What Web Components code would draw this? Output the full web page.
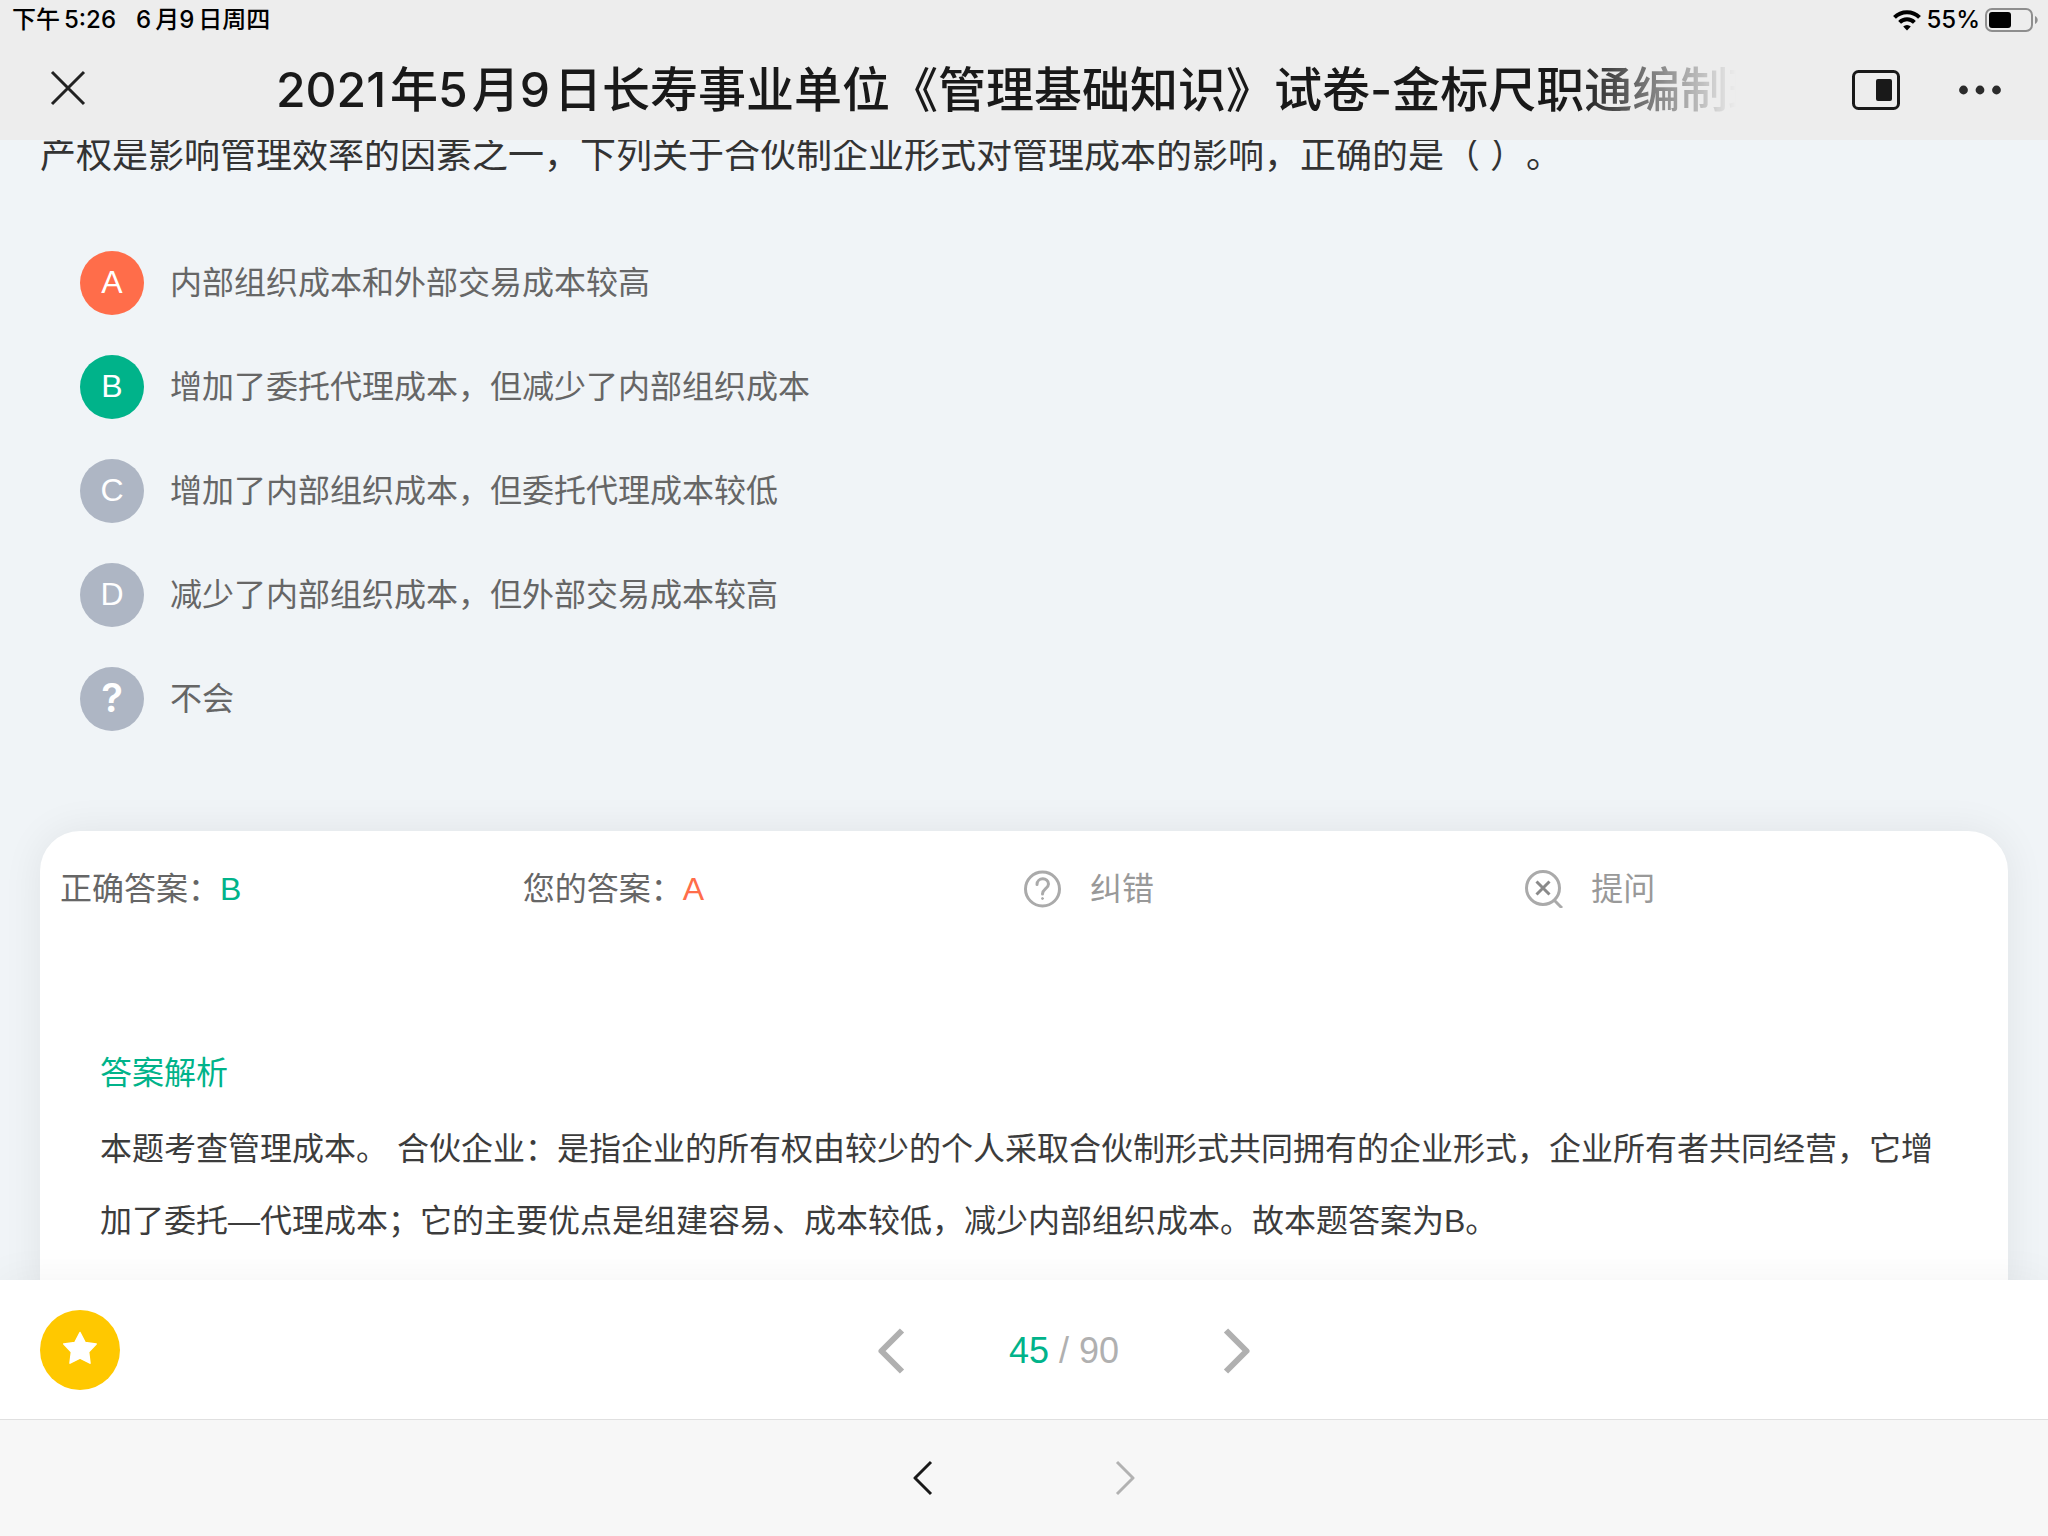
<!DOCTYPE html>
<html lang="zh-CN">
<head>
<meta charset="utf-8">
<meta name="viewport" content="width=device-width, initial-scale=1">
<title>2021年5月9日长寿事业单位《管理基础知识》试卷</title>
<style>
  body {
    margin: 0;
    font-family: "Liberation Sans", "Noto Sans CJK SC", sans-serif;
    text-spacing-trim: space-all;
    color: #333;
  }
</style>
</head>
<body>
<quiz-app></quiz-app>

<script>
// shared by every element that draws a bare button
const BUTTON = `
  button {
    margin: 0;
    padding: 0;
    border: 0;
    background: none;
    font: inherit;
    color: inherit;
    text-align: left;
    cursor: pointer;
  }
  svg {
    display: block;
  }
`;

const define = (name, html) => {
  customElements.define(name, class extends HTMLElement {
    connectedCallback() {
      if (this.shadowRoot) return;
      this.attachShadow({ mode: "open" });
      this.shadowRoot.innerHTML = html;
    }
  });
};

define("status-bar", `
  <style>
    :host {
      display: flex;
      justify-content: space-between;
      align-items: center;
      height: 40px;
      padding: 0 8px 0 12px;
      font: 500 24px/40px Inter, "Noto Sans CJK SC", sans-serif;
      color: #000;
    }
    .clock, .state {
      display: flex;
      align-items: center;
    }
    .clock {
      gap: 20px;
    }
    .clock i {
      font-style: normal;
      margin-right: 4px;
    }
    .state {
      gap: 5px;
    }
    svg {
      display: block;
    }
  </style>
  <div class="clock"><span><i>下午</i>5:26</span><span><i>6</i>月<i>9</i>日周四</span></div>
  <div class="state">
    <svg width="28" height="22" viewBox="0 0 28 22" fill="none" stroke="#000" stroke-width="4">
      <path d="M1.5 8.4a17.6 17.6 0 0 1 25 0M6.6 13.4a10.4 10.4 0 0 1 14.8 0"/>
      <path d="M14 21.4l-3.8-3.9a5.4 5.4 0 0 1 7.6 0z" fill="#000" stroke="none"/>
    </svg>
    <span>55%</span>
    <svg width="55" height="24" viewBox="0 0 55 24">
      <rect x="1" y="1" width="46" height="22" rx="6" fill="none" stroke="#8e8e8e" stroke-width="2"/>
      <rect x="4" y="4" width="22" height="16" rx="3"/>
      <path d="M50 8c3.6 1.5 3.6 6.5 0 8z" fill="#8e8e8e"/>
    </svg>
  </div>
`);

define("title-bar", `
  <style>
    ${BUTTON}
    :host {
      display: flex;
      align-items: center;
      height: 100px;
      color: #191919;
    }
    .close {
      width: 276px;
      padding-left: 50px;
      box-sizing: border-box;
    }
    h1 {
      flex: 1;
      min-width: 0;
      margin: 0;
      overflow: hidden;
      white-space: nowrap;
      font: 500 48px/72px Inter, "Noto Sans CJK SC", sans-serif;
      -webkit-mask-image: linear-gradient(to left, transparent, #000 160px);
      mask-image: linear-gradient(to left, transparent, #000 160px);
    }
    /* numbers in the date stand a little clear of the characters */
    ::slotted(span) {
      margin-right: 4px;
    }
    .actions {
      display: flex;
      justify-content: flex-end;
      align-items: center;
      gap: 59px;
      width: 312px;
      padding-right: 47px;
      box-sizing: border-box;
    }
  </style>
  <div class="close">
    <button aria-label="关闭">
      <svg width="36" height="36" viewBox="0 0 36 36" fill="none" stroke="#222" stroke-width="3">
        <path d="M2 2l32 32M34 2L2 34"/>
      </svg>
    </button>
  </div>
  <h1><slot></slot></h1>
  <div class="actions">
    <button aria-label="浮窗">
      <svg width="48" height="40" viewBox="0 0 48 40">
        <rect x="1.5" y="1.5" width="45" height="37" rx="5" fill="none" stroke="#191919" stroke-width="3"/>
        <rect x="24" y="9" width="16" height="22" rx="2" fill="#191919"/>
      </svg>
    </button>
    <button aria-label="更多">
      <svg width="42" height="10" viewBox="0 0 42 10" fill="#2b2b2b">
        <circle cx="4.5" cy="5" r="4.4"/><circle cx="21" cy="5" r="4.4"/><circle cx="37.5" cy="5" r="4.4"/>
      </svg>
    </button>
  </div>
`);

// <answer-option mark="A" state="wrong">text</answer-option>
class AnswerOption extends HTMLElement {
  connectedCallback() {
    if (this.shadowRoot) return;
    this.attachShadow({ mode: "open" });
    this.shadowRoot.innerHTML = `
      <style>
        ${BUTTON}
        :host {
          display: block;
          --mark: #aeb6c4;
        }
        :host([state="wrong"]) {
          --mark: #ff6d4a;
        }
        :host([state="right"]) {
          --mark: #00b38a;
        }
        button {
          display: flex;
          align-items: center;
          gap: 26px;
          font-size: 32px;
          line-height: 62px;
          color: #666;
        }
        .mark {
          width: 64px;
          height: 64px;
          border-radius: 50%;
          background: var(--mark);
          color: #fff;
          text-align: center;
        }
        :host([mark="?"]) .mark {
          font-family: Inter, sans-serif;
          font-size: 40px;
          font-weight: 600;
        }
      </style>
      <button><span class="mark">${this.getAttribute("mark")}</span><span><slot></slot></span></button>
    `;
  }
}
customElements.define("answer-option", AnswerOption);

define("answer-card", `
  <style>
    ${BUTTON}
    :host {
      display: block;
      border-radius: 40px 40px 0 0;
      background: #fff;
      box-shadow: 0 0 40px rgba(0, 0, 0, 0.07);
      font-size: 32px;
    }
    .summary {
      display: grid;
      grid-template-columns: 24% 26% 26% 24%;
      align-items: center;
      padding: 30px 20px 34px;
      line-height: 56px;
      color: #666;
    }
    .right {
      color: #00b38a;
    }
    .wrong {
      color: #ff6d4a;
    }
    button {
      display: flex;
      align-items: center;
      gap: 28px;
      color: #999;
    }
    .analysis {
      padding: 98px 60px 40px;
    }
    h2 {
      margin: 0 0 16px;
      font-size: 32px;
      font-weight: 400;
      line-height: 48px;
      color: #00b38a;
    }
    p {
      margin: 0;
      line-height: 72px;
      color: #3c3c3c;
    }
  </style>
  <div class="summary">
    <div>正确答案：<span class="right">B</span></div>
    <div>您的答案：<span class="wrong">A</span></div>
    <button>
      <svg width="38" height="38" viewBox="0 0 38 38" fill="none" stroke="#aaa" stroke-width="3" stroke-linecap="round">
        <circle cx="18.5" cy="19" r="17"/>
        <path d="M13 14.5c0-7.5 11.5-7.500 11.5-.5 0 4.500-6 5-6 10"/>
        <circle cx="18.5" cy="28.5" r="1" fill="#aaa" stroke-width="1"/>
      </svg>
      纠错
    </button>
    <button>
      <svg width="38" height="38" viewBox="0 0 38 38" fill="none" stroke="#aaa" stroke-width="3">
        <circle cx="18" cy="18" r="16.5"/>
        <path d="M29.5 30.5l7.5 7.5"/>
        <path d="M11.5 11.5l13 13M24.5 11.5l-13 13" stroke="#8a8a8a"/>
      </svg>
      提问
    </button>
  </div>
  <div class="analysis">
    <h2>答案解析</h2>
    <p><slot></slot></p>
  </div>
`);

define("pager-bar", `
  <style>
    ${BUTTON}
    :host {
      display: flex;
      align-items: center;
      height: 139px;
      padding: 0 40px;
      border-bottom: 1px solid #e0e0e0;
      background: #fff;
      box-shadow: 0 0 40px rgba(0, 0, 0, 0.05);
      position: relative;
    }
    .star {
      display: grid;
      place-items: center;
      width: 80px;
      height: 80px;
      border-radius: 50%;
      background: #ffc800;
    }
    nav {
      flex: 1;
      display: flex;
      justify-content: center;
      align-items: center;
      gap: 104px;
      padding-top: 3px;
      font-size: 36px;
      line-height: 48px;
      color: #b0b0b0;
    }
    b {
      font-weight: 400;
      color: #00b38a;
    }
  </style>
  <button class="star" aria-label="收藏">
    <svg width="34" height="38" viewBox="0 0 34 38" fill="#fff" stroke="#fff" stroke-width="1.5" stroke-linejoin="round">
      <path d="M17 1.5l5.200 10 11 1.400-7.600 8 1.400 11.300-10-5-10 5 1.400-11.300-7.600-8 11-1.400z"/>
    </svg>
  </button>
  <nav>
    <button aria-label="上一题">
      <svg width="28" height="46" viewBox="0 0 28 46" fill="none" stroke="#b0b0b0" stroke-width="6" stroke-linejoin="round">
        <path d="M25 2.5L4.5 23 25 43.5"/>
      </svg>
    </button>
    <span><b>45</b> / 90</span>
    <button aria-label="下一题">
      <svg width="28" height="46" viewBox="0 0 28 46" fill="none" stroke="#b0b0b0" stroke-width="6" stroke-linejoin="round">
        <path d="M3 2.5L23.5 23 3 43.5"/>
      </svg>
    </button>
  </nav>
`);

define("browser-bar", `
  <style>
    ${BUTTON}
    :host {
      display: flex;
      justify-content: center;
      align-items: center;
      gap: 182px;
      height: 116px;
      background: #f7f7f7;
      position: relative;
    }
  </style>
  <button aria-label="后退">
    <svg width="20" height="36" viewBox="0 0 20 36" fill="none" stroke="#191919" stroke-width="3" stroke-linejoin="round">
      <path d="M18 2L2 18l16 16"/>
    </svg>
  </button>
  <button aria-label="前进" disabled>
    <svg width="20" height="36" viewBox="0 0 20 36" fill="none" stroke="#b2b2b2" stroke-width="3" stroke-linejoin="round">
      <path d="M2 2l16 16L2 34"/>
    </svg>
  </button>
`);

define("quiz-app", `
  <style>
    :host {
      display: flex;
      flex-direction: column;
      height: 100vh;
      background: #f0f4f7;
    }
    header {
      position: relative;
      z-index: 1;
      background: #ededed;
    }
    main {
      flex: 1;
      min-height: 0;
      padding: 0 40px;
      overflow: hidden;
    }
    .question {
      margin: -12px 0 67px;
      font-size: 36px;
      line-height: 56px;
    }
    .options {
      display: grid;
      gap: 40px;
      padding: 0 40px;
      margin-bottom: 100px;
    }
  </style>
  <header>
    <status-bar></status-bar>
    <title-bar><span>2021</span>年<span>5</span>月<span>9</span>日长寿事业单位《管理基础知识》试卷-金标尺职通编制班</title-bar>
  </header>
  <main>
    <p class="question">产权是影响管理效率的因素之一，下列关于合伙制企业形式对管理成本的影响，正确的是（ ）。</p>
    <div class="options">
      <answer-option mark="A" state="wrong">内部组织成本和外部交易成本较高</answer-option>
      <answer-option mark="B" state="right">增加了委托代理成本，但减少了内部组织成本</answer-option>
      <answer-option mark="C">增加了内部组织成本，但委托代理成本较低</answer-option>
      <answer-option mark="D">减少了内部组织成本，但外部交易成本较高</answer-option>
      <answer-option mark="?">不会</answer-option>
    </div>
    <answer-card>本题考查管理成本。 合伙企业：是指企业的所有权由较少的个人采取合伙制形式共同拥有的企业形式，企业所有者共同经营，它增加了委托—代理成本；它的主要优点是组建容易、成本较低，减少内部组织成本。故本题答案为B。</answer-card>
  </main>
  <pager-bar></pager-bar>
  <browser-bar></browser-bar>
`);
</script>
</body>
</html>
